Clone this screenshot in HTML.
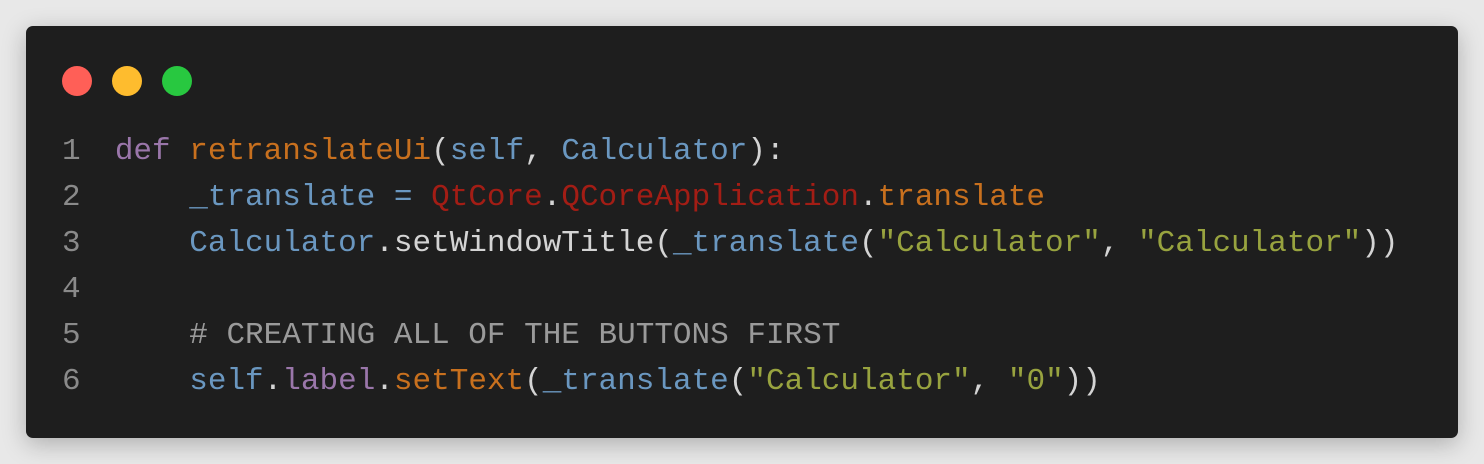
<!DOCTYPE html>
<html><head><style>
body{margin:0;width:1484px;height:464px;background:#e8e8e8;overflow:hidden}
.card{position:absolute;left:26px;top:26px;width:1432px;height:412px;background:#1e1e1e;border-radius:7px;box-shadow:0 6px 24px rgba(0,0,0,.25)}
.d{position:absolute;top:40px;width:30px;height:30px;border-radius:50%}
pre{position:absolute;left:36px;top:103px;margin:0;font-family:"Liberation Mono",monospace;font-size:31px;line-height:46px;color:#d4d4d4}
.n{color:#8a8a8a}.k{color:#9a76aa}.f{color:#c8701e}.b{color:#6a97c0}.r{color:#a31d15}.s{color:#98a33f}.c{color:#9a9a9a}
.g{margin-left:-3px}
</style></head><body>
<div class="card">
<div class="d" style="left:36px;background:#ff5f57"></div>
<div class="d" style="left:86px;background:#febc2e"></div>
<div class="d" style="left:136px;background:#28c840"></div>
<pre><span class="n">1</span> <span class="g"> </span><span class="k">def</span> <span class="f">retranslateUi</span>(<span class="b">self</span>, <span class="b">Calculator</span>):
<span class="n">2</span> <span class="g"> </span>    <span class="b">_translate</span> <span class="b">=</span> <span class="r">QtCore</span>.<span class="r">QCoreApplication</span>.<span class="f">translate</span>
<span class="n">3</span> <span class="g"> </span>    <span class="b">Calculator</span>.setWindowTitle(<span class="b">_translate</span>(<span class="s">"Calculator"</span>, <span class="s">"Calculator"</span>))
<span class="n">4</span>
<span class="n">5</span> <span class="g"> </span>    <span class="c"># CREATING ALL OF THE BUTTONS FIRST</span>
<span class="n">6</span> <span class="g"> </span>    <span class="b">self</span>.<span class="k">label</span>.<span class="f">setText</span>(<span class="b">_translate</span>(<span class="s">"Calculator"</span>, <span class="s">"0"</span>))</pre>
</div>
</body></html>
